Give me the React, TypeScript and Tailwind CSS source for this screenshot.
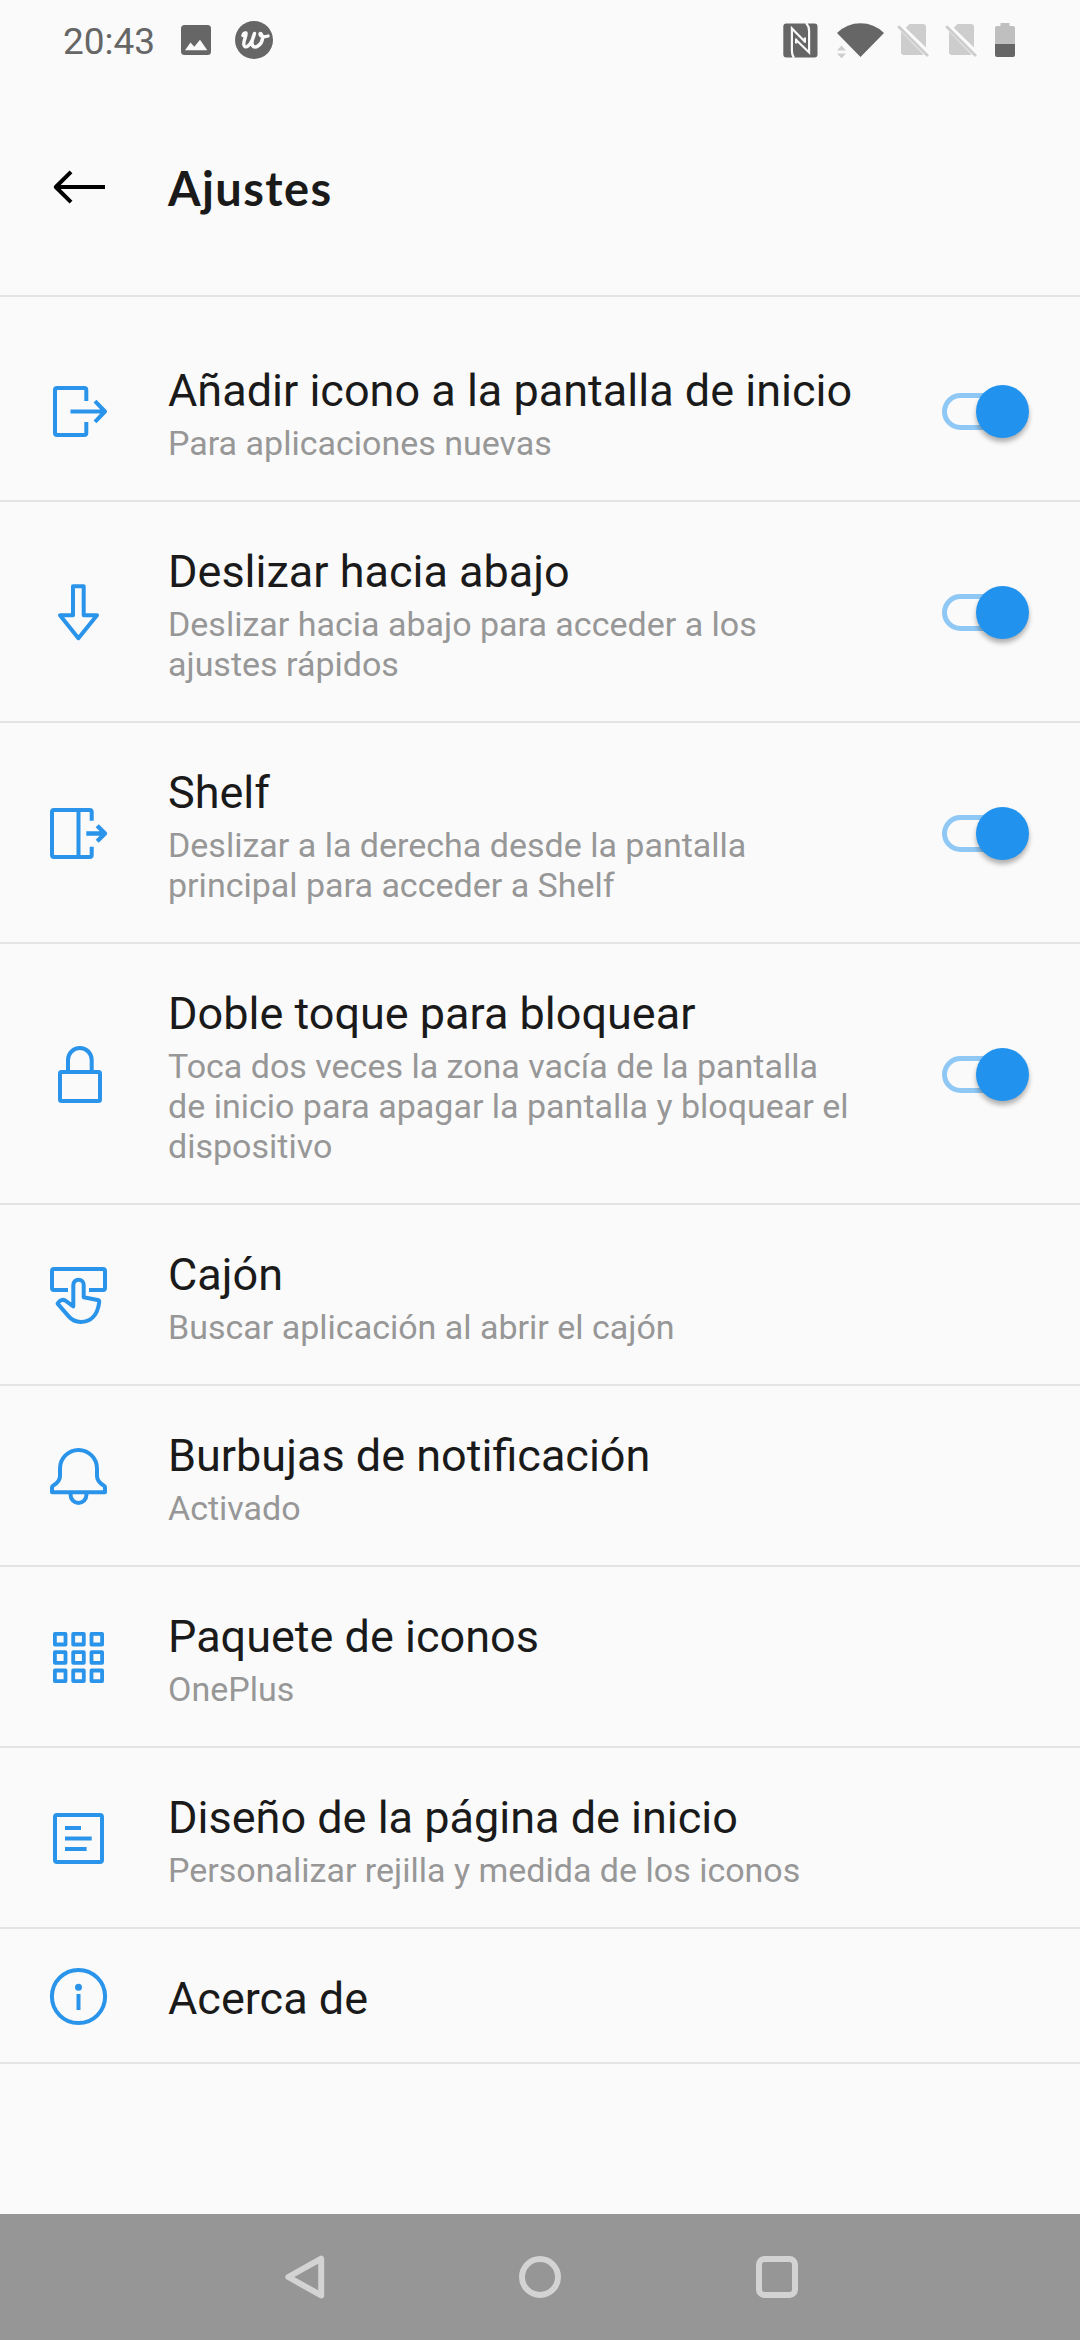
import type { ReactNode } from "react";

type Setting = {
  title: string;
  summary?: string[];
  icon: ReactNode;
  toggle?: boolean;
};

function Icon({ children }: { children: ReactNode }) {
  return (
    <svg
      className="ml-[47px] h-[63px] w-[63px] shrink-0 text-[#2a94ea]"
      viewBox="0 0 63 63"
      fill="none"
      stroke="currentColor"
      strokeWidth="4"
      strokeLinejoin="round"
    >
      {children}
    </svg>
  );
}

const AddIcon = (
  <Icon>
    <path d="M39.3 21V10a2 2 0 0 0-2-2H10a2 2 0 0 0-2 2V53a2 2 0 0 0 2 2H37.3a2 2 0 0 0 2-2V42" />
    <path d="M23.5 31.5H58M48 21.2L58 31.5L48 41.8" />
  </Icon>
);

const DownIcon = (
  <Icon>
    <path d="M26 5.3H36.7V34.2H50L31.4 57.2L13 34.2H26Z" />
  </Icon>
);

const ShelfIcon = (
  <Icon>
    <path d="M44.7 18.7V10a2 2 0 0 0-2-2H7a2 2 0 0 0-2 2V53a2 2 0 0 0 2 2H42.7a2 2 0 0 0 2-2V44.7M31.5 8V55" />
    <path d="M39.3 31.5H58M50.2 23.7L58 31.5L50.2 39.3" strokeWidth="4.4" />
  </Icon>
);

const LockIcon = (
  <Icon>
    <rect x="13" y="29" width="40" height="29" rx="1.5" />
    <path d="M21 29V16.9a11.85 11.85 0 0 1 23.7 0V29" />
  </Icon>
);

const DrawerIcon = (
  <Icon>
    <path d="M21 26H7a2 2 0 0 1-2-2V7a2 2 0 0 1 2-2H56a2 2 0 0 1 2 2V24a2 2 0 0 1-2 2H42" />
    <path d="M26.3 42.3V20.9a5.2 5.2 0 0 1 10.4 0V33.2L50.6 36c1.3 .3 1.8 1 1.6 2.2C50.6 51 44 57.9 33.7 57.9c-5 0-9-2-12-5.5L10.6 39.6c2.5-4.3 6-4.6 8.8-2.3Z" />
  </Icon>
);

const BellIcon = (
  <Icon>
    <path d="M5 47.3V42.5c0-1 .4-1.5 1.3-2C10.5 38 13 35.5 13 31V23.5a18.5 18.5 0 0 1 37 0V31c0 4.5 2.5 7 6.7 9.5 .9 .5 1.3 1 1.3 2v4.8Z" />
    <path d="M23.6 48v2.1a7.9 7.9 0 0 0 15.8 0V48" />
  </Icon>
);

const GRID = [7.9, 26.2, 44.5];

const GridIcon = (
  <Icon>
    {GRID.map((y) =>
      GRID.map((x) => <rect key={`${x}-${y}`} x={x} y={y} width="10.6" height="10.6" strokeWidth="3.8" />)
    )}
  </Icon>
);

const LayoutIcon = (
  <Icon>
    <rect x="8" y="8" width="47" height="47" rx="2" />
    <path d="M18 21H34M18 31.5H44.7M18 42H39.6" />
  </Icon>
);

const InfoIcon = (
  <Icon>
    <circle cx="31.5" cy="31.5" r="26.6" />
    <path d="M31.5 29V45" />
    <circle cx="31.5" cy="22.3" r="3.5" fill="currentColor" stroke="none" />
  </Icon>
);

const SETTINGS: Setting[] = [
  { title: "Añadir icono a la pantalla de inicio", summary: ["Para aplicaciones nuevas"], icon: AddIcon, toggle: true },
  {
    title: "Deslizar hacia abajo",
    summary: ["Deslizar hacia abajo para acceder a los", "ajustes rápidos"],
    icon: DownIcon,
    toggle: true,
  },
  {
    title: "Shelf",
    summary: ["Deslizar a la derecha desde la pantalla", "principal para acceder a Shelf"],
    icon: ShelfIcon,
    toggle: true,
  },
  {
    title: "Doble toque para bloquear",
    summary: ["Toca dos veces la zona vacía de la pantalla", "de inicio para apagar la pantalla y bloquear el", "dispositivo"],
    icon: LockIcon,
    toggle: true,
  },
  { title: "Cajón", summary: ["Buscar aplicación al abrir el cajón"], icon: DrawerIcon },
  { title: "Burbujas de notificación", summary: ["Activado"], icon: BellIcon },
  { title: "Paquete de iconos", summary: ["OnePlus"], icon: GridIcon },
  { title: "Diseño de la página de inicio", summary: ["Personalizar rejilla y medida de los iconos"], icon: LayoutIcon },
  { title: "Acerca de", icon: InfoIcon },
];

function Toggle() {
  return (
    <span role="switch" aria-checked="true" className="mr-[51px] flex shrink-0 items-center">
      <span className="h-[37px] w-[70px] rounded-full border-[5px] border-[#90c8f5]" />
      <span className="-ml-9 h-[53px] w-[53px] rounded-full bg-[#2193ee] shadow-[0_4px_5px_rgba(0,0,0,0.3)]" />
    </span>
  );
}

function Row({ title, summary, icon, toggle }: Setting) {
  return (
    <li className="flex items-center shadow-[inset_0_-2px_0_#e4e4e4]">
      {icon}
      <div className="ml-[58px] flex grow flex-col gap-1.5 pt-11 pb-[39px]">
        <h2 className="text-[45px] leading-[52px] whitespace-nowrap text-[#1a1a1a]">{title}</h2>
        {summary && (
          <p className="text-[34px] leading-10 whitespace-nowrap text-[#979797]">
            {summary.map((line) => (
              <span key={line} className="block">
                {line}
              </span>
            ))}
          </p>
        )}
      </div>
      {toggle && <Toggle />}
    </li>
  );
}

function SimOff({ className }: { className: string }) {
  return (
    <svg className={className} viewBox="0 0 32 34" fill="#cdcdcd">
      <path d="M12.5 1H26q3 0 3 3V24.5L8.7 4.8Z" />
      <path d="M4 8.6L26.5 31.5Q26 32 25 32H7q-3 0-3-3Z" />
      <path d="M2 4L30.2 32.2" stroke="#cdcdcd" strokeWidth="2.8" strokeLinecap="round" />
    </svg>
  );
}

function StatusBar() {
  return (
    <div className="flex h-20 items-center text-[#666]">
      <span className="ml-[63px] w-[118px] pt-0.5 text-[37px] leading-[43px]">20:43</span>
      <svg className="h-[30px] w-[30px]" viewBox="0 0 30 30">
        <rect width="30" height="30" rx="3.5" fill="#666" />
        <path d="M4 25.3L9.5 17.5L13.3 21.8L19 14.8L26.3 25.3Z" fill="#fafafa" />
      </svg>
      <svg className="ml-6 h-[38px] w-[38px]" viewBox="0 0 38 38" fill="none">
        <circle cx="19" cy="19" r="19" fill="#666" />
        <path
          d="M8 14.5C8.5 12.5 9.5 11.6 11 12C11.5 15 8.3 20 8.8 23.5C9.5 28.5 16 26 19.5 12.5C17.5 17.5 16.3 22 17.5 24.5C20 28.5 27 23.5 27.5 17.5C27.6 14.5 25.8 11.5 25 12.8C25 15.5 29 16.5 33 15"
          stroke="#fafafa"
          strokeWidth="3.4"
          strokeLinecap="round"
          strokeLinejoin="round"
        />
      </svg>

      <svg className="ml-[510px] h-[35px] w-[35px]" viewBox="0 0 35 35">
        <rect x="0.3" y="0.5" width="34.2" height="34" rx="3" fill="#666" />
        <path
          d="M11 35Q8.9 32 8.9 28V5.5L22 18.7M23 0Q26.1 3 26.1 8V29.5L13 16.8M21.9 19.8V14.5M13.1 15.5V20.5"
          fill="none"
          stroke="#fafafa"
          strokeWidth="2.2"
        />
      </svg>
      <svg className="ml-[19px] h-[35px] w-[47px]" viewBox="0 0 47 35">
        <path d="M0 10Q10 0.3 23.5 0.3T47 10L23.5 34Z" fill="#666" />
        <path d="M0 27.5L4.5 22.5L9 27.5ZM0 30.5H9L4.5 35.3Z" fill="#cdcdcd" />
      </svg>
      <SimOff className="ml-[13px] h-[34px] w-8" />
      <SimOff className="ml-4 h-[34px] w-8" />
      <svg className="ml-[18px] h-[34px] w-5" viewBox="0 0 20 34">
        <path d="M5.5 0H14.5V3H18Q20 3 20 5V21H0V5Q0 3 2 3H5.5Z" fill="#bfbfbf" />
        <path d="M0 21H20V32Q20 34 18 34H2Q0 34 0 32Z" fill="#666" />
      </svg>
    </div>
  );
}

function NavBar() {
  return (
    <nav className="mt-auto flex h-[126px] items-center justify-center gap-[193px] bg-[#969696]">
      <svg className="h-[44px] w-[44px]" viewBox="0 0 44 44" fill="none" stroke="#d3d3d3" strokeWidth="6" strokeLinejoin="round">
        <path d="M40.2 3.6V40.4L7.3 22Z" />
      </svg>
      <svg className="h-[44px] w-[44px]" viewBox="0 0 44 44" fill="none" stroke="#d3d3d3" strokeWidth="6">
        <circle cx="22" cy="22" r="18" />
      </svg>
      <svg className="h-[44px] w-[44px]" viewBox="0 0 44 44" fill="none" stroke="#d3d3d3" strokeWidth="6">
        <rect x="4" y="4" width="36" height="36" rx="5.5" />
      </svg>
    </nav>
  );
}

export default function App() {
  return (
    <div className="flex h-[2340px] w-[1080px] flex-col overflow-hidden bg-[#fafafa] font-[Roboto,sans-serif]">
      <StatusBar />
      <header className="flex h-[217px] items-center border-b-2 border-[#e4e4e4] pb-0.5">
        <svg className="ml-[52px] h-[36px] w-[54px]" viewBox="0 0 54 36" fill="none" stroke="#000" strokeWidth="4">
          <path d="M3.5 18H53M19 2.8L3.8 18L19 33.2" strokeLinejoin="round" />
        </svg>
        <h1 className="ml-[62px] pt-[3px] font-[Lato,sans-serif] text-[47px] leading-[64px] font-bold tracking-[1.4px] text-[#1a1a1a]">
          Ajustes
        </h1>
      </header>
      <ul className="pt-6">
        {SETTINGS.map((s) => (
          <Row key={s.title} {...s} />
        ))}
      </ul>
      <NavBar />
    </div>
  );
}
